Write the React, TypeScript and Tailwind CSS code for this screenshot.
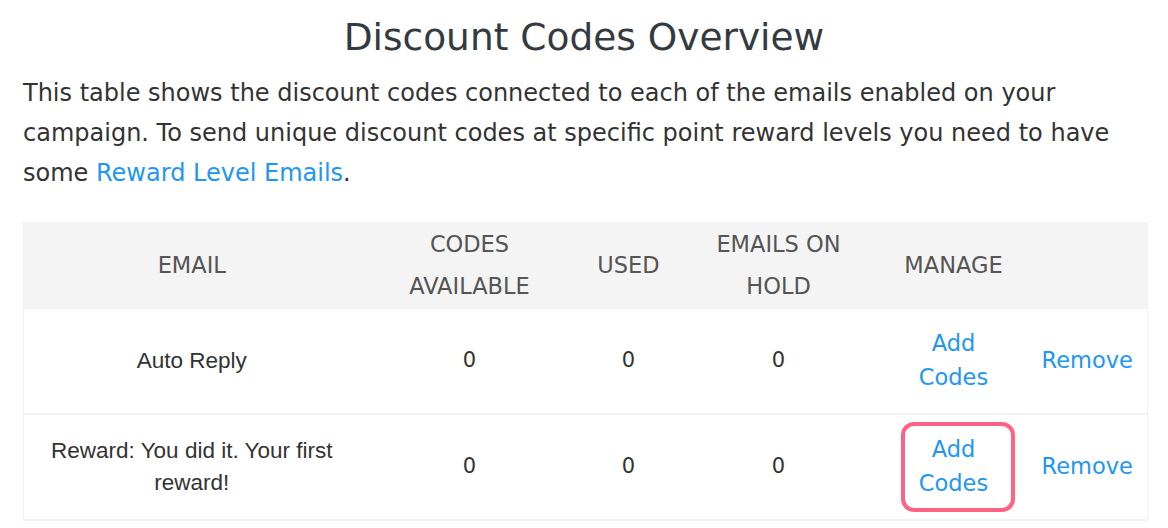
import React from "react";

const tah = { fontFamily: '"DejaVu Sans", Verdana, sans-serif' };
const ari = { fontFamily: '"Liberation Sans", Arial, sans-serif' };

function Row({ name, highlight }: { name: string; highlight?: boolean }) {
  return (
    <tr className="border-t-2 border-[#f2f2f2] h-[106px]">
      <td className="text-center text-[22.5px] leading-[32px] text-[#333] px-[20px]" style={ari}>
        {name}
      </td>
      <td className="text-center text-[21px] text-[#333]">0</td>
      <td className="text-center text-[21px] text-[#333]">0</td>
      <td className="text-center text-[21px] text-[#333]">0</td>
      <td className="text-center">
        <div className="flex justify-center">
          <a
            className={
              "block text-[22.5px] leading-[34px] text-[#2196f3] rounded-[13px] pl-[14px] pr-[23px] pt-[6px] pb-[8px] " +
              (highlight ? "border-[4px] border-[#ff6384]" : "border-[4px] border-transparent")
            }
          >
            Add
            <br />
            Codes
          </a>
        </div>
      </td>
      <td className="text-center text-[22.5px] text-[#2196f3] pr-[9px]">Remove</td>
    </tr>
  );
}

export default function App() {
  return (
    <div className="bg-white w-[1168px] h-[528px] overflow-hidden px-[23px]" style={tah}>
      <h1 className="text-center text-[37.5px] leading-[44px] text-[#343a40] pt-[15px]">
        Discount Codes Overview
      </h1>
      <p className="text-[24px] leading-[40px] text-[#333] mt-[14px]">
        This table shows the discount codes connected to each of the emails enabled on your campaign. To send unique
        discount codes at specific point reward levels you need to have some{" "}
        <a className="text-[#2196f3]">Reward Level Emails</a>.
      </p>
      <table className="mt-[29px] w-[1124px] border-x border-b-2 border-[#f2f2f2] border-collapse table-fixed">
        <colgroup>
          <col className="w-[336px]" />
          <col className="w-[220px]" />
          <col className="w-[98px]" />
          <col className="w-[202px]" />
          <col className="w-[157px]" />
          <col className="w-[111px]" />
        </colgroup>
        <thead>
          <tr className="bg-[#f4f4f4] h-[86px] text-[#555] text-[22.5px] leading-[42px]">
            <th className="font-normal">EMAIL</th>
            <th className="font-normal">
              CODES
              <br />
              AVAILABLE
            </th>
            <th className="font-normal">USED</th>
            <th className="font-normal">
              EMAILS ON
              <br />
              HOLD
            </th>
            <th className="font-normal pr-[9px]">MANAGE</th>
            <th className="font-normal"></th>
          </tr>
        </thead>
        <tbody>
          <Row name="Auto Reply" />
          <Row name={"Reward: You did it. Your first reward!"} highlight />
        </tbody>
      </table>
    </div>
  );
}
